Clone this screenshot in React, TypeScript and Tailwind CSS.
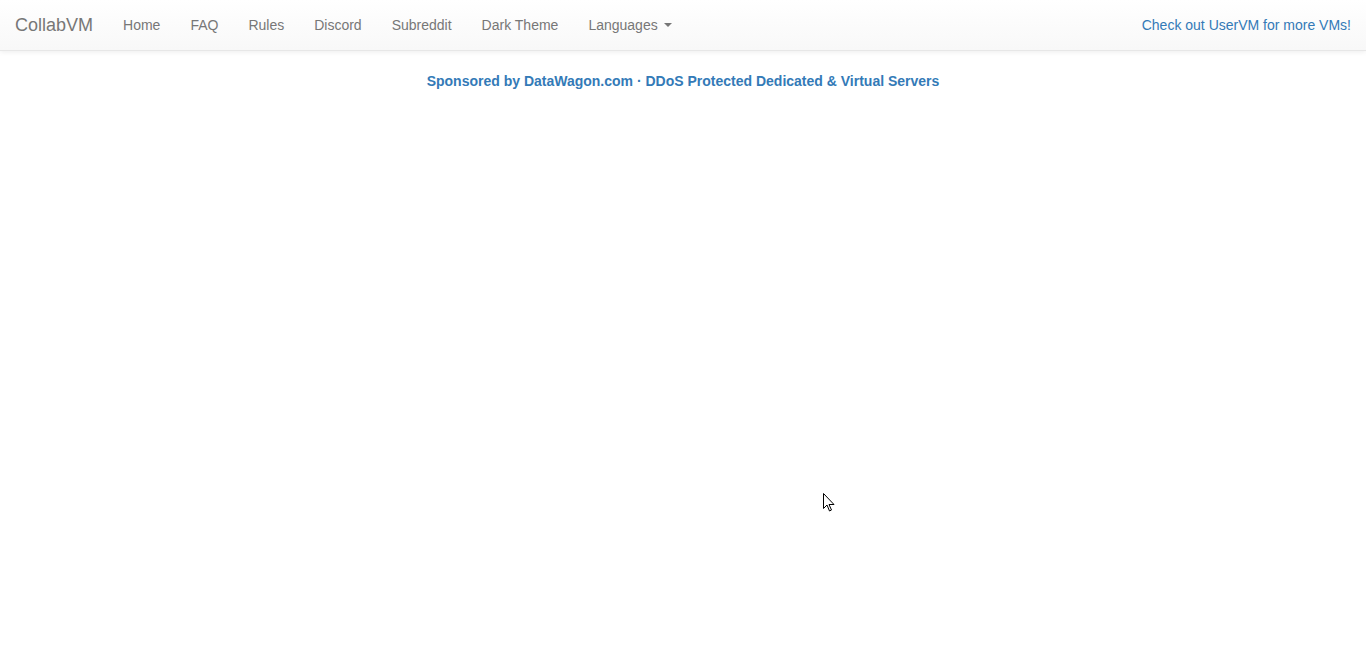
export default function App() {
  const links = ["Home", "FAQ", "Rules", "Discord", "Subreddit", "Dark Theme"];

  return (
    <div
      className="relative min-h-[671px] bg-white text-[14px] leading-[20px] text-[#333]"
      style={{ fontFamily: '"Liberation Sans", Arial, Helvetica, sans-serif' }}
    >
      {/* Navbar */}
      <nav className="mb-5 h-[51px] border-b border-[#e7e7e7] bg-gradient-to-b from-white to-[#f8f8f8] shadow-[0_1px_5px_rgba(0,0,0,0.075)]">
        <div className="flex h-[50px] items-stretch justify-between">
          <div className="flex items-stretch">
            <a className="block h-[50px] px-[15px] py-[15px] text-[18px] leading-[20px] text-[#777]">CollabVM</a>
            <ul className="flex">
              {links.map((l) => (
                <li key={l}>
                  <a className="block px-[15px] py-[15px] leading-[20px] text-[#777]">{l}</a>
                </li>
              ))}
              <li>
                <a className="flex items-center px-[15px] py-[15px] leading-[20px] text-[#777]">
                  Languages
                  <span className="ml-[6px] inline-block h-0 w-0 border-x-4 border-t-4 border-x-transparent border-t-[#777]" />
                </a>
              </li>
            </ul>
          </div>
          <a className="block px-[15px] py-[15px] leading-[20px] text-[#337ab7]">Check out UserVM for more VMs!</a>
        </div>
      </nav>

      {/* Sponsor */}
      <div className="text-center">
        <a className="font-bold text-[#337ab7]">
          Sponsored by DataWagon.com · DDoS Protected Dedicated &amp; Virtual Servers
        </a>
      </div>

      {/* Mouse pointer */}
      <svg className="absolute left-[823px] top-[493px]" width="13" height="20" viewBox="0 0 13 20">
        <path d="M0.5 0.5 L0.5 15.5 L4 12 L6.5 18 L8.5 17 L6 11.5 L11 11.5 Z" fill="white" stroke="black" strokeWidth="1" />
      </svg>
    </div>
  );
}
